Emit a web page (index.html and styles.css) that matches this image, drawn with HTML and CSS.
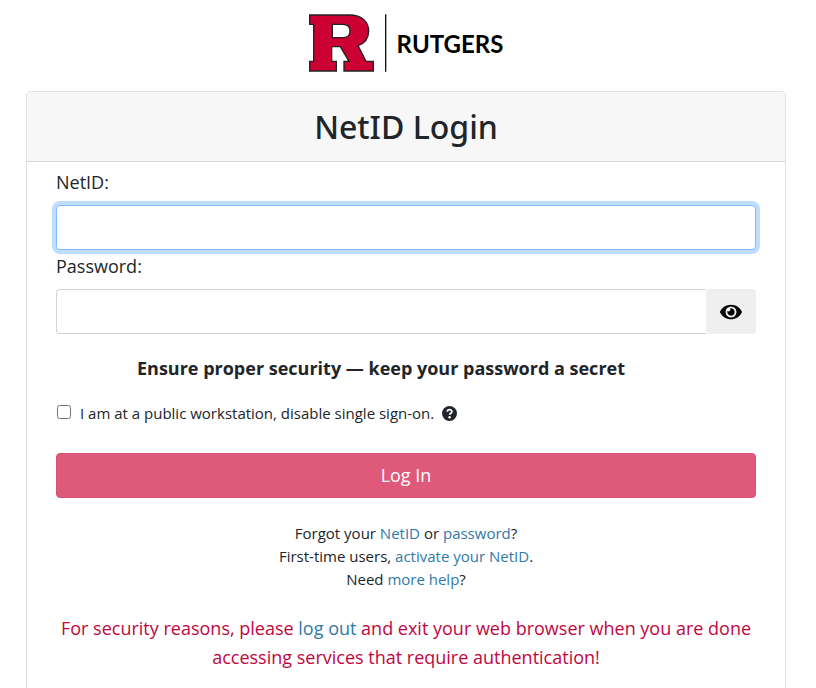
FILE: index.html
```html
<!DOCTYPE html>
<html lang="en">
<head>
    <meta charset="UTF-8">
    <meta name="viewport" content="width=device-width, initial-scale=1.0">
    <title>NetID Login</title>
    <link rel="stylesheet" href="styles.css">
</head>
<body>
    <div class="container">
        <header class="logo">
            <svg class="logo-mark" viewBox="27 26 234 174" aria-hidden="true">
                <path fill="#cc0033" stroke="#222" stroke-width="4" fill-rule="evenodd" d="M29 29H148C187 29 206 50 206 77C206 99 194 114 174 121L198 168H220V197H132V168H147L121 124H95V168H109V197H29V168H41V57H29ZM97 57H128C143 57 150 65 150 77C150 90 143 97 128 97H97Z"/>
                <path fill="#111" d="M255 27h4v172h-4z"/>
            </svg>
            <span class="logo-text">RUTGERS</span>
        </header>

        <div class="card">
            <h1>NetID Login</h1>
            <form class="card-body">
                <label for="username">NetID:</label>
                <input type="text" id="username" class="field active" name="username">

                <label for="password">Password:</label>
                <div class="password-row">
                    <input type="password" id="password" class="field" name="password">
                    <button type="button" class="show-password" aria-label="Show password">
                        <svg viewBox="0 0 576 512" width="22" height="20" aria-hidden="true">
                            <path d="M572.5 241.4C518.3 135.6 410.9 64 288 64S57.7 135.6 3.5 241.4a32.4 32.4 0 0 0 0 29.2C57.7 376.4 165.1 448 288 448s230.3-71.6 284.5-177.4a32.4 32.4 0 0 0 0-29.2zM288 400a144 144 0 1 1 144-144 143.9 143.9 0 0 1-144 144zm0-240a95.300 95.300 0 0 0-25.300 3.800 47.900 47.900 0 0 1-66.900 66.900A95.800 95.800 0 1 0 288 160z"/>
                        </svg>
                    </button>
                </div>

                <p class="reminder">Ensure proper security — keep your password a secret</p>

                <div class="public">
                    <input type="checkbox" id="public" name="public">
                    <label for="public">I am at a public workstation, disable single sign-on.</label>
                    <svg class="help" viewBox="0 0 16 16" width="15" height="15" aria-hidden="true">
                        <circle cx="8" cy="8" r="8" fill="#212529"/>
                        <path d="M5.600 6.200C5.800 3.300 10.500 3.200 10.500 6C10.500 7.800 8.200 7.700 8.200 9.400" fill="none" stroke="#fff" stroke-width="1.900"/>
                        <circle cx="8.100" cy="12" r="1.300" fill="#fff"/>
                    </svg>
                </div>

                <button type="submit" class="login">Log In</button>

                <p class="links">
                    Forgot your <a href="#">NetID</a> or <a href="#">password</a>?<br>
                    First-time users, <a href="#">activate your NetID</a>.<br>
                    Need <a href="#">more help</a>?
                </p>

                <p class="warning">For security reasons, please <a href="#">log out</a> and exit your web browser when you are done accessing services that require authentication!</p>
            </form>
        </div>
    </div>
</body>
</html>
```

FILE: styles.css
```css
* {
    box-sizing: border-box;
}
body {
    margin: 0;
    font-family: "Open Sans", "Noto Sans", sans-serif;
    font-size: 18px;
    line-height: 29px;
    color: #212529;
    background-color: #fff;
}
.container {
    padding: 14px 30px 0 26px;
}
.logo {
    display: flex;
    justify-content: center;
    align-items: center;
    gap: 10px;
    margin-bottom: 19px;
}
.logo-mark {
    width: 78px;
    height: 58px;
}
.logo-text {
    font-family: Lato, sans-serif;
    font-size: 24px;
    font-weight: 700;
    color: #000;
}
.card {
    border: 1px solid #dfdfdf;
    border-radius: 4px;
}
h1 {
    margin: 0;
    padding: 14px;
    font-family: "Noto Sans", sans-serif;
    font-size: 32px;
    font-weight: 500;
    line-height: 41px;
    text-align: center;
    background-color: #f7f7f7;
    border-bottom: 1px solid #d5d8d8;
}
.card-body {
    padding: 6px 29px 24px;
}
.card-body > label {
    display: block;
    margin-bottom: 8px;
}
.field {
    display: block;
    width: 100%;
    height: 45px;
    margin-bottom: 2px;
    padding: 6px 12px;
    font: inherit;
    border: 1px solid #ced4da;
    border-radius: 4px;
    outline: none;
}
.field.active,
.field:focus {
    border-color: #80bdff;
    box-shadow: 0 0 0 4px #bfdeff;
}
.password-row {
    display: flex;
}
.password-row .field {
    flex: 1;
    margin-bottom: 0;
    border-right: none;
    border-radius: 4px 0 0 4px;
}
.show-password {
    display: flex;
    justify-content: center;
    align-items: center;
    width: 50px;
    padding: 0;
    background-color: #efefef;
    border: none;
    border-radius: 4px;
    cursor: pointer;
}
.reminder {
    margin: 20px 50px 16px 0;
    font-weight: 700;
    text-align: center;
}
.public {
    display: flex;
    align-items: center;
    margin-bottom: 25px;
    font-size: 15px;
}
.public input {
    width: 14px;
    height: 14px;
    margin: 0 9px 4px 1px;
}
.help {
    margin-left: 8px;
}
.login {
    display: block;
    width: 100%;
    height: 45px;
    font: inherit;
    color: #fff;
    background-color: #df597b;
    border: 1px solid #d55375;
    border-radius: 4px;
    cursor: pointer;
}
.links {
    margin: 24px 0 23px;
    font-size: 15px;
    line-height: 23px;
    text-align: center;
}
.warning {
    margin: 0;
    color: #c1063f;
    text-align: center;
}
a {
    color: #3079a8;
    text-decoration: none;
}
```
